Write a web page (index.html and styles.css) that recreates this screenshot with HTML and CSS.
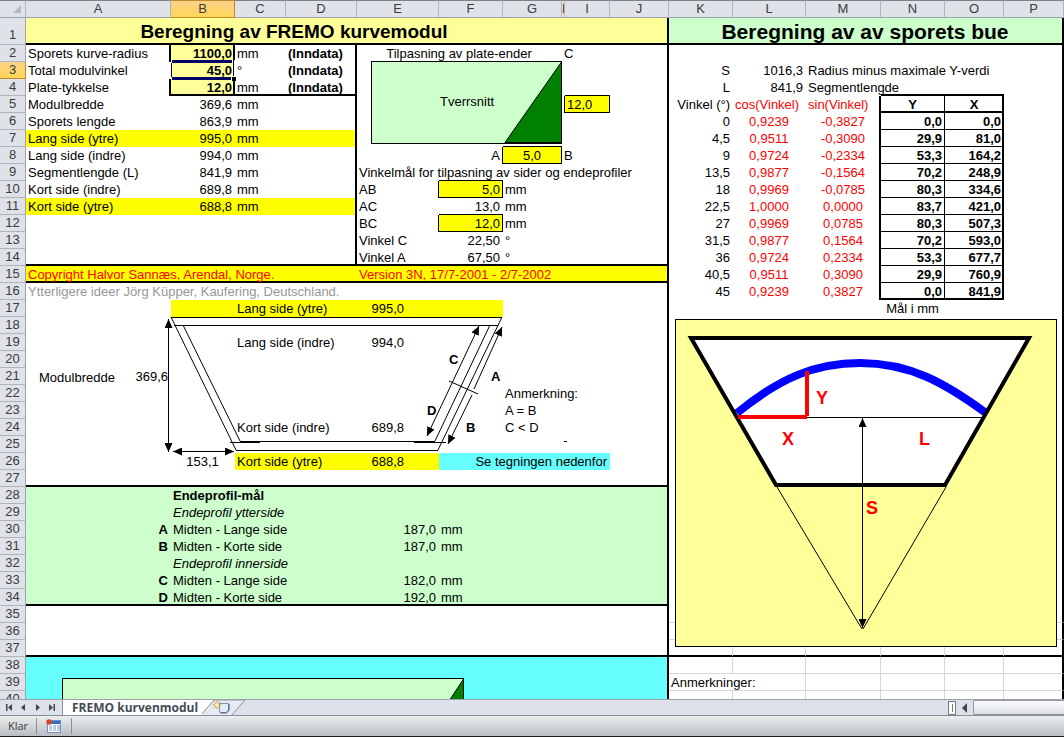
FILE: index.html
```html
<!DOCTYPE html>
<html lang="no">
<head>
<meta charset="utf-8">
<title>FREMO kurvenmodul</title>
<link rel="stylesheet" href="styles.css">
</head>
<body>
<main class="sheet">
<table class="cells">
<colgroup>
<col class="w-head"><col class="w-a"><col class="w-b"><col class="w-c"><col class="w-d"><col class="w-e"><col class="w-f"><col class="w-g"><col class="w-h"><col class="w-i"><col class="w-j"><col class="w-k"><col class="w-l"><col class="w-m"><col class="w-n"><col class="w-o"><col class="w-p">
</colgroup>
<thead>
<tr><th class="corner"><svg width="10" height="10" viewBox="0 0 10 10"><path d="M9 1V9H1Z" fill="#b4b9c1"/></svg></th><th>A</th><th class="active">B</th><th>C</th><th>D</th><th>E</th><th>F</th><th>G</th><th class="narrow">H</th><th>I</th><th>J</th><th>K</th><th>L</th><th>M</th><th>N</th><th>O</th><th>P</th></tr>
</thead>
<tbody>
<tr class="title"><th>1</th><td colspan="7" class="sand c bb2">Beregning av FREMO kurvemodul</td><td colspan="3" class="sand bb2 br2"></td><td colspan="6" class="mint c bb2 br2 large">Beregning av av sporets bue</td></tr>
<tr><th>2</th><td class="br2">Sporets kurve-radius</td><td class="sand b r br2">1100,0</td><td>mm</td><td class="b br2">(Inndata)</td><td colspan="3" class="c">Tilpasning av plate-ender</td><td>C</td><td></td><td class="br2"></td><td colspan="6" class="br2"></td></tr>
<tr><th class="active">3</th><td>Total modulvinkel</td><td class="sand b r">45,0</td><td>°</td><td class="b br2">(Inndata)</td><td colspan="5"></td><td class="br2"></td><td class="r">S</td><td class="r">1016,3</td><td>Radius minus maximale Y-verdi</td><td></td><td></td><td class="br2"></td></tr>
<tr><th>4</th><td class="br2">Plate-tykkelse</td><td class="sand b r br2 bb2">12,0</td><td class="bb2">mm</td><td class="b br2 bb2">(Inndata)</td><td colspan="4"></td><td class="bb1"></td><td class="br2"></td><td class="r">L</td><td class="r">841,9</td><td>Segmentlengde</td><td class="bb2"></td><td class="bb2"></td><td class="br2"></td></tr>
<tr><th>5</th><td>Modulbredde</td><td class="r">369,6</td><td>mm</td><td class="br2"></td><td colspan="3"></td><td class="br1"></td><td class="yellow br1 bb1">12,0</td><td class="br2"></td><td class="r">Vinkel (°)</td><td class="red">cos(Vinkel)</td><td class="red br2">sin(Vinkel)</td><td class="b c br1 bb2">Y</td><td class="b c br2 bb2">X</td><td class="br2"></td></tr>
<tr><th>6</th><td>Sporets lengde</td><td class="r">863,9</td><td>mm</td><td class="br2"></td><td colspan="5"></td><td class="br2"></td><td class="r">0</td><td class="red c">0,9239</td><td class="red c br2">-0,3827</td><td class="b r br1 bb1">0,0</td><td class="b r br2 bb1">0,0</td><td class="br2"></td></tr>
<tr><th>7</th><td class="yellow">Lang side (ytre)</td><td class="yellow r">995,0</td><td class="yellow">mm</td><td class="yellow br2"></td><td colspan="2"></td><td class="bb1"></td><td colspan="2"></td><td class="br2"></td><td class="r">4,5</td><td class="red c">0,9511</td><td class="red c br2">-0,3090</td><td class="b r br1 bb1">29,9</td><td class="b r br2 bb1">81,0</td><td class="br2"></td></tr>
<tr><th>8</th><td>Lang side (indre)</td><td class="r">994,0</td><td>mm</td><td class="br2"></td><td></td><td class="r br1">A</td><td class="yellow c br1 bb1">5,0</td><td>B</td><td></td><td class="br2"></td><td class="r">9</td><td class="red c">0,9724</td><td class="red c br2">-0,2334</td><td class="b r br1 bb1">53,3</td><td class="b r br2 bb1">164,2</td><td class="br2"></td></tr>
<tr><th>9</th><td>Segmentlengde (L)</td><td class="r">841,9</td><td>mm</td><td class="br2"></td><td>Vinkelmål for tilpasning av sider og endeprofiler</td><td class="bb1"></td><td colspan="3"></td><td class="br2"></td><td class="r">13,5</td><td class="red c">0,9877</td><td class="red c br2">-0,1564</td><td class="b r br1 bb1">70,2</td><td class="b r br2 bb1">248,9</td><td class="br2"></td></tr>
<tr><th>10</th><td>Kort side (indre)</td><td class="r">689,8</td><td>mm</td><td class="br2"></td><td class="br1">AB</td><td class="yellow r br1 bb1">5,0</td><td>mm</td><td colspan="2"></td><td class="br2"></td><td class="r">18</td><td class="red c">0,9969</td><td class="red c br2">-0,0785</td><td class="b r br1 bb1">80,3</td><td class="b r br2 bb1">334,6</td><td class="br2"></td></tr>
<tr><th>11</th><td class="yellow">Kort side (ytre)</td><td class="yellow r">688,8</td><td class="yellow">mm</td><td class="yellow br2"></td><td>AC</td><td class="r bb1">13,0</td><td>mm</td><td colspan="2"></td><td class="br2"></td><td class="r">22,5</td><td class="red c">1,0000</td><td class="red c br2">0,0000</td><td class="b r br1 bb1">83,7</td><td class="b r br2 bb1">421,0</td><td class="br2"></td></tr>
<tr><th>12</th><td colspan="3"></td><td class="br2"></td><td class="br1">BC</td><td class="yellow r br1 bb1">12,0</td><td>mm</td><td colspan="2"></td><td class="br2"></td><td class="r">27</td><td class="red c">0,9969</td><td class="red c br2">0,0785</td><td class="b r br1 bb1">80,3</td><td class="b r br2 bb1">507,3</td><td class="br2"></td></tr>
<tr><th>13</th><td colspan="3"></td><td class="br2"></td><td>Vinkel C</td><td class="r">22,50</td><td>°</td><td colspan="2"></td><td class="br2"></td><td class="r">31,5</td><td class="red c">0,9877</td><td class="red c br2">0,1564</td><td class="b r br1 bb1">70,2</td><td class="b r br2 bb1">593,0</td><td class="br2"></td></tr>
<tr><th>14</th><td colspan="3" class="bb2"></td><td class="br2 bb2"></td><td class="bb2">Vinkel A</td><td class="r bb2">67,50</td><td class="bb2">°</td><td colspan="2" class="bb2"></td><td class="br2 bb2"></td><td class="r">36</td><td class="red c">0,9724</td><td class="red c br2">0,2334</td><td class="b r br1 bb1">53,3</td><td class="b r br2 bb1">677,7</td><td class="br2"></td></tr>
<tr><th>15</th><td colspan="4" class="yellow red bb2">Copyright Halvor Sannæs, Arendal, Norge.</td><td colspan="6" class="yellow red bb2 br2">Version 3N, 17/7-2001 - 2/7-2002</td><td class="r">40,5</td><td class="red c">0,9511</td><td class="red c br2">0,3090</td><td class="b r br1 bb1">29,9</td><td class="b r br2 bb1">760,9</td><td class="br2"></td></tr>
<tr><th>16</th><td colspan="9" class="gray">Ytterligere ideer Jörg Küpper, Kaufering, Deutschland.</td><td class="br2"></td><td class="r">45</td><td class="red c">0,9239</td><td class="red c br2">0,3827</td><td class="b r br1 bb2">0,0</td><td class="b r br2 bb2">841,9</td><td class="br2"></td></tr>
<tr><th>17</th><td></td><td class="yellow"></td><td colspan="2" class="yellow">Lang side (ytre)</td><td class="yellow measure">995,0</td><td class="yellow"></td><td colspan="3"></td><td class="br2"></td><td colspan="3"></td><td class="c">Mål i mm</td><td></td><td class="br2"></td></tr>
<tr><th>18</th><td colspan="10" class="br2"></td><td colspan="6" class="br2"></td></tr>
<tr><th>19</th><td colspan="2"></td><td colspan="2">Lang side (indre)</td><td class="measure">994,0</td><td colspan="5" class="br2"></td><td colspan="6" class="br2"></td></tr>
<tr><th>20</th><td colspan="10" class="br2"></td><td colspan="6" class="br2"></td></tr>
<tr><th>21</th><td class="r">369,6</td><td colspan="9" class="br2"></td><td colspan="6" class="br2"></td></tr>
<tr><th>22</th><td colspan="6"></td><td colspan="4" class="br2">Anmerkning:</td><td colspan="6" class="br2"></td></tr>
<tr><th>23</th><td colspan="6"></td><td colspan="4" class="br2">A = B</td><td colspan="6" class="br2"></td></tr>
<tr><th>24</th><td colspan="2"></td><td colspan="2">Kort side (indre)</td><td class="measure">689,8</td><td></td><td colspan="4" class="br2">C &lt; D</td><td colspan="6" class="br2"></td></tr>
<tr><th>25</th><td colspan="10" class="br2"></td><td colspan="6" class="br2"></td></tr>
<tr><th>26</th><td></td><td class="c">153,1</td><td colspan="2" class="yellow">Kort side (ytre)</td><td class="yellow measure">688,8</td><td colspan="4" class="cyan r">Se tegningen nedenfor</td><td class="br2"></td><td colspan="6" class="br2"></td></tr>
<tr><th>27</th><td colspan="10" class="br2 bb2"></td><td colspan="6" class="br2"></td></tr>
<tr><th>28</th><td class="mint"></td><td colspan="9" class="mint b br2">Endeprofil-mål</td><td colspan="6" class="br2"></td></tr>
<tr><th>29</th><td class="mint"></td><td colspan="9" class="mint i br2">Endeprofil ytterside</td><td colspan="6" class="br2"></td></tr>
<tr><th>30</th><td class="mint b r">A</td><td colspan="3" class="mint">Midten - Lange side</td><td class="mint r">187,0</td><td colspan="5" class="mint br2">mm</td><td colspan="6" class="br2"></td></tr>
<tr><th>31</th><td class="mint b r">B</td><td colspan="3" class="mint">Midten - Korte side</td><td class="mint r">187,0</td><td colspan="5" class="mint br2">mm</td><td colspan="6" class="br2"></td></tr>
<tr><th>32</th><td class="mint"></td><td colspan="9" class="mint i br2">Endeprofil innerside</td><td colspan="6" class="br2"></td></tr>
<tr><th>33</th><td class="mint b r">C</td><td colspan="3" class="mint">Midten - Lange side</td><td class="mint r">182,0</td><td colspan="5" class="mint br2">mm</td><td colspan="6" class="br2"></td></tr>
<tr><th>34</th><td class="mint b r bb2">D</td><td colspan="3" class="mint bb2">Midten - Korte side</td><td class="mint r bb2">192,0</td><td colspan="5" class="mint br2 bb2">mm</td><td colspan="6" class="br2"></td></tr>
<tr><th>35</th><td colspan="10" class="br2"></td><td class="grid"></td><td class="grid"></td><td class="grid"></td><td class="grid"></td><td class="grid"></td><td class="grid br2"></td></tr>
<tr><th>36</th><td colspan="10" class="br2"></td><td class="grid"></td><td class="grid"></td><td class="grid"></td><td class="grid"></td><td class="grid"></td><td class="grid br2"></td></tr>
<tr><th>37</th><td colspan="10" class="br2 bb2"></td><td class="grid bb2"></td><td class="grid bb2"></td><td class="grid bb2"></td><td class="grid bb2"></td><td class="grid bb2"></td><td class="grid br2 bb2"></td></tr>
<tr><th>38</th><td colspan="10" class="cyan br2"></td><td class="grid"></td><td class="grid"></td><td class="grid"></td><td class="grid"></td><td class="grid"></td><td class="grid br2"></td></tr>
<tr><th>39</th><td colspan="10" class="cyan br2"></td><td colspan="2" class="grid">Anmerkninger:</td><td class="grid"></td><td class="grid"></td><td class="grid"></td><td class="grid br2"></td></tr>
<tr><th>40</th><td colspan="10" class="cyan br2"></td><td class="grid"></td><td class="grid"></td><td class="grid"></td><td class="grid"></td><td class="grid"></td><td class="grid br2"></td></tr>
</tbody>
</table>

<svg class="drawings" width="1064" height="708" viewBox="0 0 1064 708">
<defs>
<marker id="head" markerUnits="userSpaceOnUse" markerWidth="9" markerHeight="8" refX="9" refY="4" orient="auto-start-reverse"><path d="M0 0L9 4L0 8Z"/></marker>
</defs>
<!-- selected cell -->
<path d="M172 60H232V63H172ZM172 77H231V80H172ZM171 63H172V77H171Z" class="selection"/>
<path d="M232 60H233V76H232ZM234 60H235V76H234Z" fill="#fff"/>
<path d="M233 60H234V76H233ZM232 76H236V81H232Z"/>
<path d="M231.500 76V81M232 76.500H236" stroke="#fff"/>
<!-- plate cross-section -->
<rect x="371.500" y="61.500" width="190" height="82" class="plate"/>
<path d="M561.500 62L505 142.500H561.500Z" class="wedge"/>
<text x="440" y="106">Tverrsnitt</text>
<!-- module outline -->
<g class="thin">
<path d="M171 317.500H502M174 325.500H498M236 450.500H438M240 441.500H435M230 442.500H260M414 442.500H446"/>
<path d="M171 317L236 450M183 325L240 441M502 317L438 450M490 325L435 441M449 381L478 394"/>
<path class="arrows" d="M168.500 319V452"/>
<path class="arrows" d="M173 451.500H234"/>
<path class="arrows" d="M479 326L427 436"/>
<path class="arrow-end" d="M474 389L502 327"/>
<path class="arrow-end" d="M472 395L448 444"/>
<path d="M564 441.500H567M566 459.500H570"/>
</g>
<text x="39" y="382">Modulbredde</text>
<g class="mark"><text x="449" y="364">C</text><text x="427" y="415">D</text><text x="491" y="381">A</text><text x="466" y="432">B</text></g>
<!-- track arc -->
<rect x="675.500" y="319.500" width="381" height="327" class="board"/>
<path d="M691 338H1029L945 485H776Z" fill="#fff"/>
<path d="M737 413C780 378 815 363 860 363C910 363 945 383 986 413" class="track"/>
<path d="M691 338H1029L945 485H776Z" class="frame"/>
<g class="thin"><path d="M738 417.500H984M777 487L862 629M946 487L863 629"/><path class="arrows" d="M862.500 418V628"/></g>
<path d="M738 417H807M807 371V416" class="offset"/>
<g class="letter"><text x="816" y="404">Y</text><text x="782" y="445">X</text><text x="919" y="445">L</text><text x="866" y="514">S</text></g>
<!-- lower plate drawing -->
<rect x="62.500" y="678.500" width="401" height="40" class="plate"/>
<path d="M463.500 679L438 718H463.500Z" class="wedge"/>
</svg>
</main>

<nav class="tabbar" aria-label="Ark">
<div class="steps">
<button type="button" aria-label="Første ark"><svg width="9" height="9" viewBox="0 0 9 9"><path d="M1 1H2.500V8H1ZM7 1V8L3 4.500Z"/></svg></button>
<button type="button" aria-label="Forrige ark"><svg width="9" height="9" viewBox="0 0 9 9"><path d="M6 1V8L2 4.500Z"/></svg></button>
<button type="button" aria-label="Neste ark"><svg width="9" height="9" viewBox="0 0 9 9"><path d="M3 1V8L7 4.500Z"/></svg></button>
<button type="button" aria-label="Siste ark"><svg width="9" height="9" viewBox="0 0 9 9"><path d="M6.500 1H8V8H6.500ZM2 1V8L6 4.500Z"/></svg></button>
</div>
<button type="button" class="tab">FREMO kurvenmodul</button>
<button type="button" class="newtab" aria-label="Sett inn regneark"><svg width="48" height="16" viewBox="0 0 48 16"><path d="M0 0H12L0 14Z" fill="#fff"/><path d="M-1 15L12 0H43L30 15" fill="#e6eaf1" stroke="#8d929a"/><path d="M17.500 3.500H26.500V10L24 12.500H17.500Z" fill="#e4ecf9" stroke="#7f93b8"/><path d="M27 4V10.500L24.500 13H19" fill="none" stroke="#3f5780"/><path d="M15 1V9M11 5H19M12 2L18 8M18 2L12 8" stroke="#d08a26"/><circle cx="15" cy="5" r="2" fill="#fff3c4"/></svg></button>
<div class="scroll">
<span class="splitter"></span>
<button type="button" aria-label="Rull til venstre"><svg width="6" height="10" viewBox="0 0 6 10"><path d="M5 0V10L0 5Z"/></svg></button>
<span class="thumb"></span>
</div>
</nav>
<footer class="status">
<span class="ready">Klar</span>
<button type="button" aria-label="Spill inn makro"><svg width="16" height="14" viewBox="0 0 16 14"><rect x="1.500" y="1.500" width="13" height="12" fill="#fff" stroke="#6f8fc4"/><path d="M2 2H14V5H2Z" fill="#3f6cb8"/><path d="M3 7H6M7 7H10M11 7H14M3 9H6M7 9H10M11 9H14M3 11H6M7 11H10M11 11H14" stroke="#7c9bd0"/><circle cx="3" cy="3" r="2.800" fill="#d9472b"/></svg></button>
</footer>
</body>
</html>
```

FILE: styles.css
```css
* { box-sizing: border-box; }

body {
  margin: 0;
  height: 100vh;
  display: flex;
  flex-direction: column;
  overflow: hidden;
  background: #fff;
  color: #000;
  font: 13px/13px "Liberation Sans", Arial, sans-serif;
}

button { margin: 0; padding: 0; border: 0; background: none; font: inherit; color: inherit; }
svg { display: block; }

.sheet { position: relative; flex: 1; min-height: 0; overflow: hidden; }

.cells { table-layout: fixed; width: 1064px; border-collapse: separate; border-spacing: 0; }
.w-head { width: 26px; }
.w-a { width: 145px; }
.w-b, .w-f, .w-k, .w-n { width: 64px; }
.w-c { width: 51px; }
.w-d { width: 71px; }
.w-e { width: 82px; }
.w-g, .w-j, .w-o { width: 59px; }
.w-h { width: 3px; }
.w-i { width: 45px; }
.w-l { width: 73px; }
.w-m { width: 75px; }
.w-p { width: 60px; }

.cells th {
  height: 17px;
  padding: 0;
  border-right: 1px solid #9ea3ab;
  border-bottom: 1px solid #b1b5ba;
  background: #dfe2e8;
  color: #3b3b3b;
  font-weight: 400;
  font-size: 13px;
  line-height: 16px;
  text-align: center;
  overflow: hidden;
}
.cells thead th {
  height: 18px;
  border-top: 1px solid #808285;
  border-right-color: #b1b5ba;
  border-bottom-color: #9ea3ab;
}
.cells thead th.corner { border-right-color: #b1b5ba; }
.corner svg { margin: 0 3px 0 auto; }
.cells th.active {
  background: linear-gradient(#f9d28a, #ffd657);
  border-color: #c2892b;
}

.cells td {
  height: 17px;
  padding: 2px 3px 0 2px;
  border: 0 solid #000;
  vertical-align: top;
  white-space: nowrap;
}
.cells .title th { height: 27px; padding-top: 7px; }
.cells .title td { height: 27px; padding: 2px 0 0; font-size: 19px; line-height: 23px; font-weight: 700; }
.cells .title td.large { font-size: 21px; }

.cells td.grid { border-right: 1px solid #d8d8d8; border-bottom: 1px solid #d8d8d8; }
.cells td.br1 { border-right: 1px solid #000; padding-right: 2px; }
.cells td.br2 { border-right: 2px solid #000; padding-right: 1px; }
.cells td.bb1 { border-bottom: 1px solid #000; }
.cells td.bb2 { border-bottom: 2px solid #000; }
.cells td.measure { text-align: right; padding-right: 35px; }

.r { text-align: right; }
.c { text-align: center; }
.b { font-weight: 700; }
.i { font-style: italic; }
.red { color: #f00; }
.gray { color: #969696; }
.sand { background: #ffff99; }
.mint { background: #ccffcc; }
.yellow { background: #ffff00; }
.cyan { background: #66ffff; }

.drawings { position: absolute; left: 0; top: 0; pointer-events: none; }
.selection { fill: #000066; }
.thin { fill: none; stroke: #000; stroke-width: 1px; }
.arrows { marker-start: url(#head); marker-end: url(#head); }
.arrow-end { marker-end: url(#head); }
marker path { fill: #000; stroke: none; }
.plate { fill: #ccffcc; stroke: #000; }
.wedge { fill: #008000; stroke: #000; }
.board { fill: #ffff99; stroke: #000; }
.frame { fill: none; stroke: #000; stroke-width: 4px; }
.track { fill: none; stroke: #00f; stroke-width: 8px; }
.offset { fill: none; stroke: #f00; stroke-width: 4px; }
.mark { font-weight: 700; }
.letter { fill: #f00; font-size: 18px; font-weight: 700; }

.tabbar {
  display: flex;
  height: 17px;
  border-top: 1px solid #9da1a8;
  border-bottom: 1px solid #8a8f96;
  background: #dde1e9;
}
.steps { display: flex; align-items: center; gap: 5px; width: 62px; padding-left: 5px; fill: #41464e; }
.tab {
  padding: 0 4px 0 9px;
  border-left: 1px solid #8a8f96;
  background: #fff;
  color: #444a55;
  font: 700 12px/15px "Open Sans", "Noto Sans", sans-serif;
}
.newtab { height: 15px; overflow: hidden; }
.scroll { display: flex; align-items: center; margin-left: auto; width: 116px; fill: #41464e; }
.splitter { width: 8px; height: 14px; border: 1px solid #777c84; background: linear-gradient(#777c84, #777c84) center / 1px 8px no-repeat #fff; }
.scroll button { display: flex; justify-content: center; width: 17px; }
.thumb { flex: 1; height: 15px; border: 1px solid #9297a0; border-right: 0; border-radius: 2px 0 0 2px; background: linear-gradient(#fafbfc, #dcdfe5); }

.status {
  display: flex;
  align-items: center;
  height: 21px;
  border-bottom: 1px solid #1c1c1c;
  background: linear-gradient(#eceff1, #b9bdc1);
  color: #3b3f46;
  font: 11px/16px "Open Sans", "Noto Sans", sans-serif;
}
.ready { padding: 0 8px; width: 37px; border-right: 1px solid #8d9196; }
.status button { padding: 1px 9px; border-right: 1px solid #8d9196; }
```
